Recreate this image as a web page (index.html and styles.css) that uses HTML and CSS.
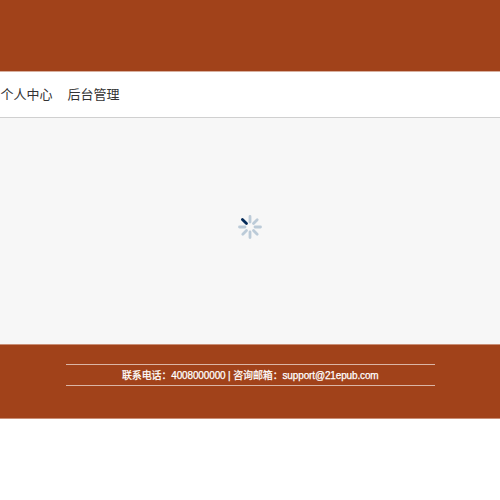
FILE: index.html
```html
<!DOCTYPE html>
<html lang="zh-CN">
<head>
<meta charset="utf-8">
<title>个人中心</title>
<link rel="stylesheet" href="styles.css">
</head>
<body>
<header class="banner"></header>
<nav class="nav"><a class="nav-link">个人中心</a><a class="nav-link">后台管理</a></nav>
<main class="content">
<svg class="spinner" viewBox="-12 -12 24 24" width="24" height="24">
<path d="M0-5V-10.5M5 0H10.5M0 5V10.5M-5 0H-10.5M3.5-3.5L7.2-7.2M3.5 3.5L7.2 7.2M-3.5 3.5L-7.2 7.2"/>
<path class="active" d="M-3.5-3.5L-7.6-7.6"/>
</svg>
</main>
<footer class="footer"><p class="contact">联系电话：4008000000 | 咨询邮箱：support@21epub.com</p></footer>
</body>
</html>
```
FILE: styles.css
```css
body {
  margin: 0;
  background: #fff;
  font-family: "Liberation Sans", "Noto Sans CJK SC", sans-serif;
}
.banner {
  height: 71px;
  background: #a1421a;
}
.nav {
  display: flex;
  gap: 15px;
  height: 45px;
  padding-left: 0.6px;
  border-top: 1px solid #d8b09f;
  border-bottom: 1px solid #d0d0d0;
  line-height: 45px;
  font-size: 13px;
  color: #333;
}
.content {
  display: flex;
  justify-content: center;
  height: 226px;
  background: #f7f7f7;
}
.spinner {
  margin-top: 97px;
}
.spinner path {
  fill: none;
  stroke: #bccbd8;
  stroke-width: 2.8;
  stroke-linecap: round;
}
.spinner .active {
  stroke: #052c5a;
}
.footer {
  height: 75px;
  padding-top: 19px;
  box-sizing: border-box;
  border-top: 1px solid #c98e76;
  border-bottom: 1px solid #c98e76;
  background: #a1421a;
}
.contact {
  width: 369px;
  height: 20px;
  margin: 0 auto;
  border-top: 1px solid #dbb5a5;
  border-bottom: 1px solid #dbb5a5;
  color: #fff;
  font-size: 10px;
  letter-spacing: -0.14px;
  line-height: 21px;
  text-align: center;
  text-indent: 0.5px;
  -webkit-text-stroke: 0.25px #fff;
}
```
